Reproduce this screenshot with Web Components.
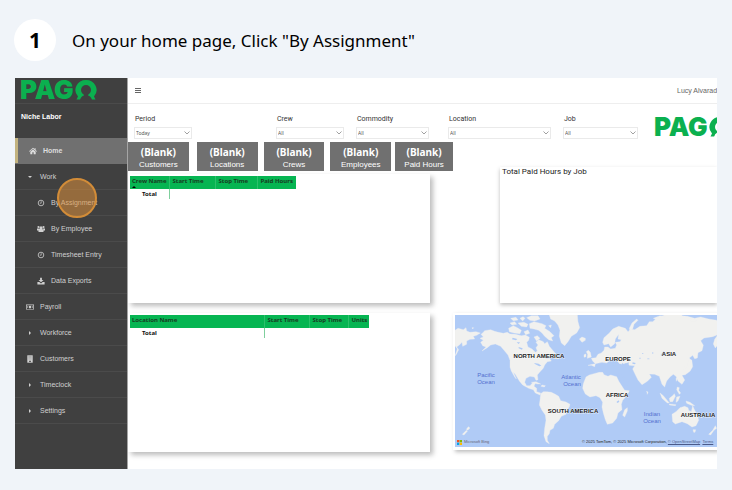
<!DOCTYPE html>
<html lang="en">
<head>
<meta charset="utf-8">
<title>Home page guide</title>
<style>
body { margin: 0; background: #f0f4f9; font-family: "Noto Sans", sans-serif; color: #111; }
</style>
</head>
<body>
<guide-step number="1">
  <span slot="title">On your home page, Click "By Assignment"</span>
  <app-shell>
    <side-nav slot="nav" company="Niche Labor"></side-nav>
    <top-bar slot="bar" user="Lucy Alvarado"></top-bar>
    <report-page></report-page>
  </app-shell>
</guide-step>

<script>
const define = (name, render) => customElements.define(name, class extends HTMLElement {
  connectedCallback() {
    if (this.shadowRoot) return;
    this.attachShadow({ mode: "open" }).innerHTML = render(this);
  }
});

define("guide-step", el => `
<style>
:host { display: block; padding: 19px 15px 21px; }
header { display: flex; align-items: center; gap: 16px; margin: 0 0 17px -1px; }
b { flex: none; width: 42px; height: 42px; border-radius: 50%; background: #fff; display: grid; place-items: center; font-size: 21px; line-height: 24px; color: #000; }
h1 { margin: 0; font-size: 17px; line-height: 24px; font-weight: 400; color: #000; padding-top: 2px; }
</style>
<header><b>${el.getAttribute("number")}</b><h1><slot name="title"></slot></h1></header>
<slot></slot>`);

define("app-shell", () => `
<style>
:host { display: flex; background: #fff; }
aside { flex: none; width: 112px; background: #404040; border-right: 1px solid #a5a5a5; display: flex; flex-direction: column; }
main { flex: 1; min-width: 0; overflow: hidden; }
</style>
<aside><slot name="nav"></slot></aside>
<main><slot name="bar"></slot><slot></slot></main>`);

define("pago-logo", () => `
<style>
:host { display: flex; gap: 1px; font: 900 26px/20px Inter, sans-serif; color: #0bb04f; white-space: nowrap; }
svg { flex: none; width: 22px; height: 20px; }
.in { fill: var(--logo-bg, #fff); }
</style>
<span>PAG</span>
<svg viewBox="1 0 22 20" role="img" aria-label="O">
<path d="M12 0a10.500 10 0 0 1 8 16.500l1.500 3H2.500l1.500-3A10.500 10 0 0 1 12 0z" fill="#0bb04f"/>
<circle class="in" cx="12" cy="10" r="5"/>
<path class="in" d="M9.500 14h5l-.5 1.500q3 .8 4 4.500v1H6v-1q1-3.700 4-4.500z"/>
</svg>`);

const icons = {
  home: '<path d="M0 4.2 4 .8l1.6 1.3V1.2h1v1.7L8 4.2l-.5.5L4 1.8.5 4.7zM1.3 4.7 4 2.5l2.7 2.2v2.5h-2V5.3H3.3v1.9h-2z"/>',
  down: '<path d="M2 3h4L4 5z"/>',
  right: '<path d="M3 2v4l2-2z"/>',
  clock: '<circle cx="4" cy="4" r="2.8" fill="none" stroke="currentColor" stroke-width=".8"/><path d="M4.200 2.200v2H2.800" fill="none" stroke="currentColor" stroke-width=".7"/>',
  users: '<circle cx="4" cy="2.7" r="1.5"/><circle cx="1.5" cy="2" r="1.1"/><circle cx="6.5" cy="2" r="1.1"/><path d="M0 3.5h2.3L3 4.3 1.2 5.5H0zM8 3.5H5.7L5 4.3l1.8 1.2H8zM1.5 7V5.4Q1.7 4 3 4h2q1.3 0 1.5 1.4V7z"/>',
  download: '<path d="M3.1.7h1.8V3h1.6L4 5.3 1.5 3h1.6zM.4 5h1.9L4 6.4 5.7 5h1.9v2.4H.4z"/>',
  money: '<path d="M0 1.6h8v5H0zm.7.7v3.6h6.6V2.3z" fill-rule="evenodd"/><circle cx="4" cy="4.1" r="1.3"/><path d="M1 3.6h1v1H1zM6 3.6h1v1H6z"/>',
  building: '<path d="M1.3.3h5.4v7.4H1.3z"/><path d="M2.3 1.4h3.4M2.3 2.7h3.4M2.3 4h3.4" stroke="#888" stroke-width=".5"/><path d="M3.2 5.7h1.6v1.2H3.2z" fill="#404040"/>'
};

define("nav-item", el => `
<style>
:host { display: block; position: relative; border-bottom: 1px solid #4b4b4b; color: #d0d0d0; }
a { display: flex; align-items: center; height: 25px; padding-left: 11px; color: inherit; text-decoration: none; font: 7px/10px "Liberation Sans", sans-serif; }
svg { width: 8px; height: 8px; margin-right: 6px; fill: currentColor; flex: none; }
:host([level="2"]) a { padding-left: 22px; }
:host([active]) { background: #707070; border-color: #707070; color: #ddd; }
:host([active]) a { border-left: 3px solid #c2b27f; font-weight: 700; }
:host([target])::after { content: ""; position: absolute; left: 42px; top: -12px; width: 36px; height: 36px; border: 2px solid #d28c38; border-radius: 50%; background: #e0913a88; pointer-events: none; }
</style>
<a href="#"><svg viewBox="0 0 8 8" aria-hidden="true">${icons[el.getAttribute("icon")]}</svg><slot></slot></a>`);

define("side-nav", el => `
<style>
:host { display: block; }
.brand { height: 23px; padding: 2px 0 0 5px; border-bottom: 1px solid #4b4b4b; --logo-bg: #404040; }
.company { padding: 8px 6px 16px; font: 700 7px/10px "Liberation Sans", sans-serif; color: #fff; }
</style>
<div class="brand"><pago-logo></pago-logo></div>
<div class="company">${el.getAttribute("company")}</div>
<nav>
<nav-item icon="home" active>Home</nav-item>
<nav-item icon="down">Work</nav-item>
<nav-item icon="clock" level="2" target>By Assignment</nav-item>
<nav-item icon="users" level="2">By Employee</nav-item>
<nav-item icon="clock" level="2">Timesheet Entry</nav-item>
<nav-item icon="download" level="2">Data Exports</nav-item>
<nav-item icon="money">Payroll</nav-item>
<nav-item icon="right">Workforce</nav-item>
<nav-item icon="building">Customers</nav-item>
<nav-item icon="right">Timeclock</nav-item>
<nav-item icon="right">Settings</nav-item>
</nav>`);

define("top-bar", el => `
<style>
:host { display: flex; align-items: center; justify-content: space-between; height: 25px; border-bottom: 1px solid #eee; padding-left: 7px; }
button { border: 0; background: none; padding: 0; width: 6px; height: 6px; display: grid; }
svg { width: 6px; height: 6px; }
span { width: 40px; white-space: nowrap; font: 7px/10px "Liberation Sans", sans-serif; color: #666; }
</style>
<button aria-label="Menu"><svg viewBox="0 0 6 6"><path d="M0 .5h6M0 2.500h6M0 4.500h6" stroke="#666"/></svg></button>
<span>${el.getAttribute("user")}</span>`);

define("report-filter", el => `
<style>
:host { display: block; margin-right: var(--gap, 12px); }
label { display: block; font: 400 7px/10px Roboto, sans-serif; color: #333; margin-bottom: 3px; padding-left: 1px; }
div { display: flex; position: relative; }
select { appearance: none; width: 100%; height: 12px; border: 1px solid #eaeaea; border-radius: 0; background: #fff; padding: 0 10px 0 1px; font: 5px/8px "Noto Sans", sans-serif; color: #555; }
svg { position: absolute; right: 2px; top: 4px; width: 6px; height: 4px; pointer-events: none; }
</style>
<label for="s">${el.getAttribute("label")}</label>
<div><select id="s"><option>${el.getAttribute("value")}</option></select>
<svg viewBox="0 0 6 4"><path d="M.5.5 3 3 5.500.5" fill="none" stroke="#777" stroke-width=".7"/></svg></div>`);

define("kpi-card", el => `
<style>
:host { display: block; margin-right: var(--gap, 6px); background: #707070; color: #fff; text-align: center; padding: 3px 0 1px; white-space: nowrap; }
b { display: block; font-size: 10px; line-height: 15px; }
span { display: block; font: 8px/10px "Liberation Sans", sans-serif; }
</style>
<b>(Blank)</b><span>${el.getAttribute("label")}</span>`);

define("report-table", el => {
  const cols = el.getAttribute("columns").split("|").map(c => c.split(":"));
  return `
<style>
:host { display: block; background: #fff; padding: 2px; box-shadow: 3px 3px 5px #0004; }
table { width: ${el.getAttribute("width")}; border-collapse: collapse; table-layout: fixed; font-size: 6px; line-height: 10px; }
th { position: relative; height: 13px; padding: 0 0 0 2px; box-sizing: border-box; background: #06b552; text-align: left; font-weight: 700; color: #173d22; white-space: nowrap; vertical-align: top; }
th + th { border-left: 1px solid #2cc06b; padding-left: 3px; }
td { padding: 0; height: 10px; font-weight: 700; }
td:first-child { padding-left: 12px; }
td + td { border-left: 1px solid #7fcf9d; }
td + td ~ td { border: 0; }
svg { position: absolute; left: 2px; bottom: 1px; width: 4px; height: 2px; }
</style>
<table><colgroup>${cols.map(c => `<col style="width:${c[1]}">`).join("")}</colgroup>
<thead><tr>${cols.map((c, i) => `<th>${c[0]}${i === 0 && el.hasAttribute("sorted") ? '<svg viewBox="0 0 4 2"><path d="M0 2 2 0l2 2z"/></svg>' : ""}</th>`).join("")}</tr></thead>
<tbody><tr><td>Total</td>${"<td></td>".repeat(cols.length - 1)}</tr></tbody></table>`;
});

define("world-map", () => `
<style>
:host { display: block; position: relative; background: #fff; padding: 2px 0 3px 2px; box-shadow: 2px 2px 4px #0004; font-family: "Liberation Sans", sans-serif; }
.map { width: 100%; height: 100%; display: block; background: #b0cbf6; }
.c { font-size: 6px; font-weight: 700; fill: #222; text-anchor: middle; stroke: #fff9; stroke-width: 1px; paint-order: stroke; }
.o { font-size: 6px; fill: #5470cf; text-anchor: middle; }
footer { position: absolute; left: 4px; right: 0; bottom: 5px; display: flex; align-items: center; font-size: 4px; line-height: 6px; white-space: nowrap; color: #222; }
.ms { width: 5px; height: 5px; margin-right: 2px; }
.bing { flex: 0 0 118px; color: #667; }
a { color: #4a5a8a; }
</style>
<svg class="map" viewBox="0 0 262 132" preserveAspectRatio="xMinYMin slice" role="img" aria-label="World map">
<g transform="scale(.33333) translate(-15 -30)" fill="#f1f1ef" stroke="#f1f1ef" stroke-width="1" stroke-linejoin="round">
<path d="M15 76 24 70 40 74 48 68 50 78 60 82 78 80 91 84 80 91 70 94 74 102 60 103 50 108 50 118 38 124 36 112 28 120 20 126 26 134 18 150 15 152 22 132 15 122zM68 72l3-4-5 0z"/>
<path d="M93 88 98 84 104 77 122 74 134 79 145 82 160 85 172 82 180 87 196 88 214 92 226 90 238 97 236 106 230 112 234 126 246 132 256 142 262 138 258 128 264 120 258 112 266 104 280 110 284 116 292 110 298 124 308 136 318 147 306 154 292 156 286 162 298 160 304 168 292 170 284 180 280 190 270 200 262 210 264 224 258 226 253 216 240 214 228 220 224 232 230 242 240 242 248 233 256 234 252 244 260 250 260 260 272 264 270 270 256 264 250 254 236 250 218 240 208 228 196 208 190 202 199 222 194 216 184 198 180 186 180 166 174 150 164 138 152 124 136 117 122 120 112 128 96 138 108 126 98 122 92 112 100 106 90 100 100 96z"/>
<path d="M176 70 190 62 202 68 214 76 210 86 192 84 178 80zM180 54 194 50 200 58 186 60zM204 54 222 52 234 58 230 66 214 64zM230 38 244 32 264 32 270 42 254 48 240 46zM238 56 252 50 276 56 288 62 284 70 300 80 312 92 304 98 308 108 296 104 284 94 276 84 266 76 252 72 240 70zM222 80l12-5 5 10-12 4zM252 96l10-4 8 8-10 8zM182 40l16-3 6 8-14 2zM210 40l9-5 6 5-7 8zM296 62l8-2-2 8zM308 154l6-6 10 6 2 8-10-2zM244 232l14-2 14 7-10 0zM276 240l10 2-3 4-10-2z"/>
<path d="M298 30H382L384 50 389 68 380 84 364 94 354 110 344 122 334 114 328 94 330 76 324 60 314 48 302 42zM388 102l8-6 10 4 0 6-10 6z"/>
<path d="M272 266 280 260 290 260 304 262 316 268 326 274 332 287 348 291 360 298 358 306 350 314 348 328 334 334 326 347 314 358 310 370 300 376 298 386 292 394 292 406 298 416 288 410 282 392 284 370 288 346 286 330 276 316 268 300 270 286z"/>
<path d="M55 365 60 369 53 376 49 373zM49 376 52 379 42 390 37 388z"/>
<path d="M414 181h10l10 4 2-9-8-8-4-8 14-2 6-10 10-4 8-8 2-10 10 0 8 6 14-2 4-10-4-8 14-2 4-6-10-2 2-14-10 14-2 14-12 10-6-10-14 4-4-8 4-14 16-14 10-12 18-8 20 6 8 10 8-8 12 2 16-10 20-2 8-12 10 0 12-10 18-8 20-8 14-10 22 4 2 14 16 2 22 6 18-4 24 6 24 4 34 6v40l-12-2-8 9-4 14-14 16-6-12 4-14 10-14-16 6-26 4-10 8 8 14-4 16-12 6-2 16-8 2-6-10-10 8 8 10 2 16-8 14-14 10-10 2 8 14-8 13-12-10-6-14-8-6-10 8-10 12-6 18-8-8-8-24-14-6-16-1 6 10-12 12-16 10-12-14-10-20-6-13 6-10-16-1-10-7-8 2-6-8-4-8 10 10-8 10-10-12-10-6-12 4-10 8-14-2z"/>
<path d="M408 216 418 210 432 206 448 202 458 202 462 209 474 214 482 210 500 215 506 228 516 244 524 256 538 257 532 270 518 286 514 298 516 314 504 324 500 340 488 354 472 358 466 344 460 324 456 306 458 292 450 278 438 272 420 276 406 267 398 250 400 236zM524 314l8-6 0 10-8 18-6-5z"/>
<path d="M412 160l12-4-3-14-6-6-6 4 4 8zM402 149l6-2 0 8-6 2zM540 78l-2-8 8-16 14-12 4 4-12 12-4 14zM610 40l20-8 16 2-8 10-12 4zM708 44l20-3 12 6-18 0zM718 164l8 1-6 12-10 12-12 6-2-5 14-6z"/>
<path d="M666 328 678 320 690 308 704 304 714 308 716 316 724 320 728 302 734 316 742 330 746 346 738 362 726 366 712 356 696 350 676 357 668 350zM729 374l8 0-2 8-4 0zM796 362l4 8-8 6-10 14-6-2 12-12zM630 264 640 272 658 294 652 294 636 280zM658 280l10-8 5-6 3 8-8 16-8 0zM680 276l10-2-6 14-6 4zM658 297l20 2-2 3-18-2zM708 288l12 4 14 10-10-1-14-6zM682 246l6 2-2 8 6 8-4 4-8-14zM678 219l4 2-3 8zM590 258l4 4-2 6z"/>
<g fill="#b0cbf6" stroke="none"><path d="M488 182l8-9 8 5 7-2 10 8-16 3zM526 176l10-4 0 9 4 14-6 3-6-10zM502 204l10 10 15 17 12-2-4-7-12-5-5-8-5 0 7 16 16 15-4 3-16-11-12-15zM500 290l6-4 2 5-7 3zM548 172l9 2-2 4-8-2zM632 150l9-12 3 2-10 14zM252 174l14 2 8 6-6 2-12-6zM188 98l14 4-4 4-12-3zM206 126l12 4-2 4-10-4zM200 112l10 0-4 5z"/><path d="M576 144h4v3h-4zM592 160h6v3h-6zM568 158h4v4h-4zM606 142h4v4h-4z" opacity=".7"/></g>
</g>
<text class="c" x="84" y="43">NORTH AMERICA</text>
<text class="c" x="118" y="98">SOUTH AMERICA</text>
<text class="c" x="163" y="46">EUROPE</text>
<text class="c" x="214" y="41">ASIA</text>
<text class="c" x="162" y="82">AFRICA</text>
<text class="c" x="243" y="102">AUSTRALIA</text>
<text class="o" x="31" y="62">Pacific</text><text class="o" x="31" y="69">Ocean</text>
<text class="o" x="116" y="64">Atlantic</text><text class="o" x="117" y="71">Ocean</text>
<text class="o" x="197" y="101">Indian</text><text class="o" x="197" y="108">Ocean</text>
</svg>
<footer>
<svg class="ms" viewBox="0 0 5 5"><path fill="#f25022" d="M0 0h2.300v2.300H0z"/><path fill="#7fba00" d="M2.700 0H5v2.300H2.700z"/><path fill="#00a4ef" d="M0 2.700h2.300V5H0z"/><path fill="#ffb900" d="M2.700 2.700H5V5H2.700z"/></svg>
<span class="bing">Microsoft Bing</span>
<span>© 2025 TomTom, © 2025 Microsoft Corporation, <a href="#">© OpenStreetMap</a> &nbsp;<a href="#">Terms</a></span>
</footer>`);

define("report-page", () => `
<style>
:host { display: block; padding-bottom: 17px; }
.filters { display: grid; grid-template-columns: minmax(0, 142fr) minmax(0, 80fr) minmax(0, 92fr) minmax(0, 115fr) minmax(0, 91fr) minmax(0, 63fr); padding: 10px 0 3px 6px; }
pago-logo { align-self: center; }
.body { display: grid; grid-template-columns: 302fr 23fr 264fr; grid-template-rows: auto 129px 146px; row-gap: 3px; }
.kpis { grid-column: 1 / 3; display: grid; grid-template-columns: 69fr 67fr 67fr 65fr 58fr; }
.one { grid-row: 2; grid-column: 1; }
.two { grid-row: 3; grid-column: 1; margin-top: 7px; }
.chart { grid-row: 1 / 3; grid-column: 3; margin: 25px 0 0 47px; background: #fff; box-shadow: 0 2px 4px #0004; }
h2 { margin: 0; padding: 0 2px; font: 400 8px/10px Roboto, sans-serif; color: #222; }
world-map { grid-row: 3; grid-column: 3; margin: 7px 0 2px; }
</style>
<div class="filters">
<report-filter label="Period" value="Today" style="--gap:84px"></report-filter>
<report-filter label="Crew" value="All"></report-filter>
<report-filter label="Commodity" value="All" style="--gap:19px"></report-filter>
<report-filter label="Location" value="All"></report-filter>
<report-filter label="Job" value="All" style="--gap:16px"></report-filter>
<pago-logo></pago-logo>
</div>
<div class="body">
<div class="kpis">
<kpi-card label="Customers" style="--gap:8px"></kpi-card>
<kpi-card label="Locations"></kpi-card>
<kpi-card label="Crews"></kpi-card>
<kpi-card label="Employees" style="--gap:4px"></kpi-card>
<kpi-card label="Paid Hours" style="--gap:0px"></kpi-card>
</div>
<report-table class="one" width="166px" sorted columns="Crew Name:39px|Start Time:46px|Stop Time:42px|Paid Hours:39px"></report-table>
<section class="chart"><h2>Total Paid Hours by Job</h2></section>
<report-table class="two" width="239px" columns="Location Name:134px|Start Time:45px|Stop Time:39px|Units:21px"></report-table>
<world-map></world-map>
</div>`);
</script>
</body>
</html>
